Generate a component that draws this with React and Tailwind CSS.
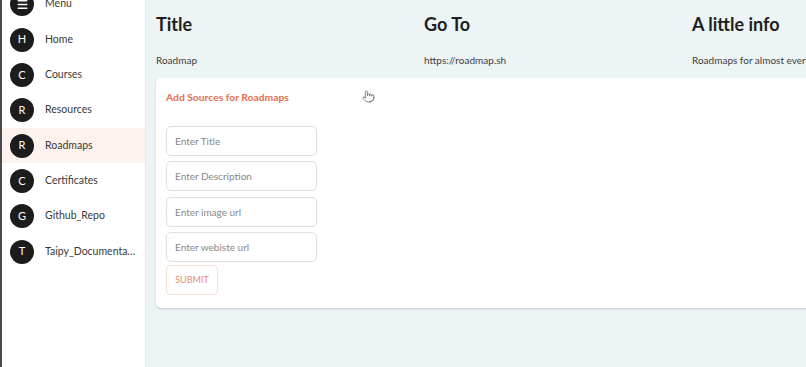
import { Menu, Pointer } from 'lucide-react'

const navItems = [
  { letter: 'H', label: 'Home' },
  { letter: 'C', label: 'Courses' },
  { letter: 'R', label: 'Resources' },
  { letter: 'R', label: 'Roadmaps', active: true },
  { letter: 'C', label: 'Certificates' },
  { letter: 'G', label: 'Github_Repo' },
  { letter: 'T', label: 'Taipy_Documentation' },
]

const columns = [
  { head: 'Title', value: 'Roadmap' },
  { head: 'Go To', value: 'https://roadmap.sh' },
  { head: 'A little info', value: 'Roadmaps for almost everything' },
]

const fields = ['Enter Title', 'Enter Description', 'Enter image url', 'Enter webiste url']

function Avatar({ children }) {
  return (
    <div className="w-[24px] h-[24px] rounded-full bg-[#1c1c1c] text-white flex items-center justify-center text-[11px] shrink-0">
      {children}
    </div>
  )
}

function NavRow({ letter, label, active }) {
  return (
    <li className={`h-[35.35px] flex items-center pl-[8px] pr-[6px] gap-[11px] ${active ? 'bg-[#fdf2ee]' : ''}`}>
      <Avatar>{letter}</Avatar>
      <span className="text-[10.5px] text-[#3a3a3a] truncate">{label}</span>
    </li>
  )
}

export default function App() {
  return (
    <div className="flex h-[367px] w-[806px] overflow-hidden font-['Lato','Noto_Sans',sans-serif]">
      {/* sidebar */}
      <aside className="w-[146px] shrink-0 bg-white border-l-[2px] border-l-[#4a4a4a] border-r border-r-[#e4eaeb]">
        <ul className="-mt-[13.5px]">
          <li className="h-[35.35px] flex items-center pl-[8px] gap-[11px]">
            <Avatar><Menu size={13} strokeWidth={2.5} /></Avatar>
            <span className="text-[10.5px] text-[#3a3a3a]">Menu</span>
          </li>
          {navItems.map((n, i) => <NavRow key={i} {...n} />)}
        </ul>
      </aside>

      {/* main */}
      <main className="flex-1 bg-[#edf4f5] pl-[10px] overflow-hidden min-w-0">
        <div className="grid grid-cols-[268px_268px_268px] w-[804px]">
          {columns.map(c => (
            <div key={c.head}>
              <div className="h-[48px] flex items-center text-[18px] font-bold text-[#1f1f1f]">{c.head}</div>
              <div className="h-[24px] flex items-center text-[10px] text-[#3d3d3d] whitespace-nowrap">{c.value}</div>
            </div>
          ))}
        </div>

        {/* add sources card */}
        <div className="mt-[6px] w-[720px] bg-white rounded-[5px] shadow-[0_1px_2px_rgba(0,0,0,0.18)] pl-[10px] pb-[13px]">
          <div className="h-[40px] flex items-center relative">
            <span className="text-[10.3px] font-bold text-[#e56c4d]">Add Sources for Roadmaps</span>
            <Pointer size={13} strokeWidth={1.5} className="absolute left-[196px] top-[12px] text-[#666]" />
          </div>
          <div className="mt-[8px] flex flex-col gap-[5.3px] w-[151px]">
            {fields.map(f => (
              <input
                key={f}
                placeholder={f}
                className="h-[30px] w-full border border-[#dfdfdf] rounded-[5px] px-[8px] text-[10px] placeholder:text-[#888888] outline-none"
              />
            ))}
          </div>
          <button className="mt-[3px] h-[30px] w-[52px] border border-[#f6dcd4] rounded-[5px] text-[9px] text-[#ea8b74]">
            SUBMIT
          </button>
        </div>
      </main>
    </div>
  )
}
